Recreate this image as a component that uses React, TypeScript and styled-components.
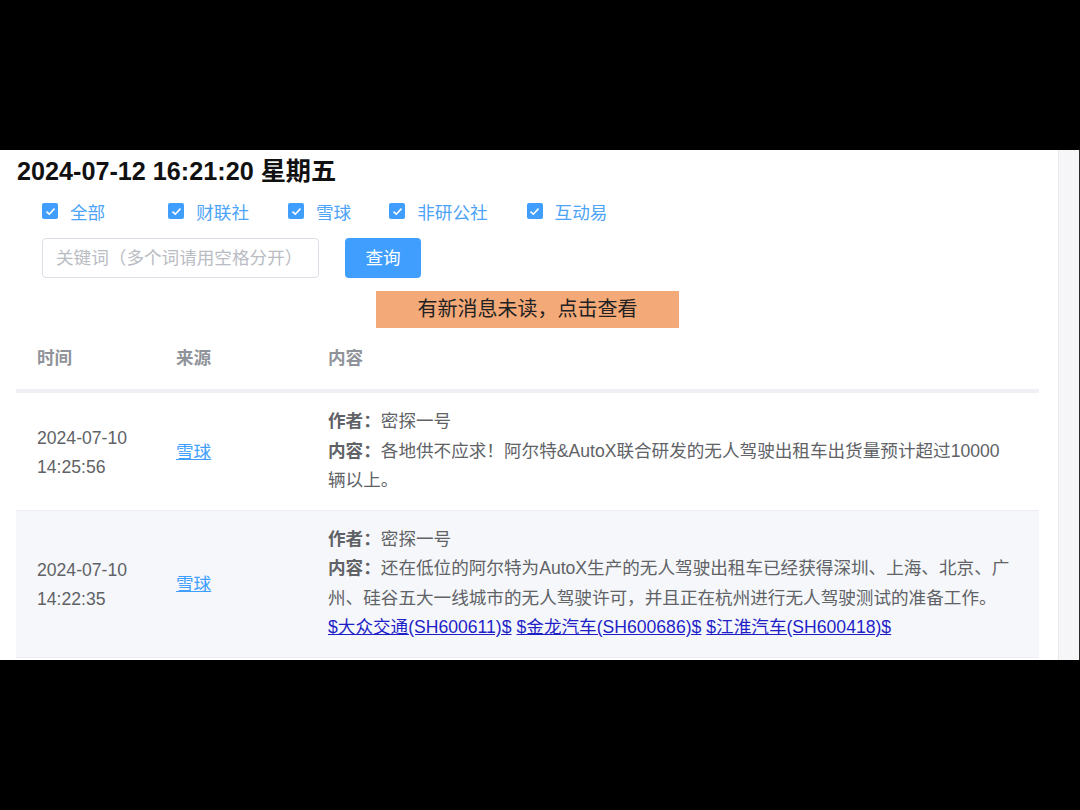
import React from 'react';
import styled, { createGlobalStyle } from 'styled-components';

const GlobalStyle = createGlobalStyle`
  html, body {
    margin: 0;
    padding: 0;
    background: #000;
  }
  body {
    font-family: "Liberation Sans", "Noto Sans CJK SC", sans-serif;
  }
`;

const Frame = styled.div`
  display: flex;
  flex-direction: column;
  width: 1080px;
  height: 810px;
  background: #000;
`;

const Letterbox = styled.div<{ $h: number }>`
  height: ${(p) => p.$h}px;
  flex: none;
  background: #000;
`;

const Screen = styled.div`
  display: flex;
  height: 510px;
  overflow: hidden;
  background: #fff;
`;

const Page = styled.div`
  flex: 1;
  padding: 0 19px 0 16px;
  overflow: hidden;
`;

const Scrollbar = styled.div`
  flex: none;
  width: 22px;
  box-sizing: border-box;
  background: #f6f6f8;
  border-left: 1px solid #e8e8eb;
  border-right: 1px solid #2a2a2a;
`;

const Title = styled.h1`
  margin: 0;
  padding: 3px 0 0 1px;
  height: 36px;
  line-height: 36px;
  font-size: 25.2px;
  font-weight: bold;
  color: #111;
`;

const FilterRow = styled.div`
  display: flex;
  align-items: center;
  height: 30px;
  margin: 7px 0 0 26px;
`;

const CheckItem = styled.label<{ $gap: number }>`
  display: flex;
  align-items: center;
  margin-right: ${(p) => p.$gap}px;
  cursor: pointer;
`;

const Box = styled.span`
  display: flex;
  align-items: center;
  justify-content: center;
  width: 16px;
  height: 16px;
  border-radius: 2px;
  background: #409eff;
`;

const CheckLabel = styled.span`
  margin-left: 12px;
  font-size: 17.6px;
  color: #4da3f7;
`;

const SearchRow = styled.div`
  display: flex;
  align-items: center;
  gap: 26px;
  margin: 12px 0 0 26px;
`;

const Input = styled.input`
  box-sizing: border-box;
  width: 277px;
  height: 40px;
  padding: 0 13px;
  border: 1px solid #dcdfe6;
  border-radius: 4px;
  font-family: inherit;
  font-size: 17.6px;
  color: #606266;
  outline: none;
  &::placeholder {
    color: #b9bcc3;
  }
`;

const Button = styled.button`
  width: 76px;
  height: 40px;
  padding: 0 0 3px;
  border: none;
  border-radius: 4px;
  background: #409eff;
  color: #fff;
  font-family: inherit;
  font-size: 17.6px;
`;

const BannerRow = styled.div`
  display: flex;
  justify-content: center;
  margin-top: 13px;
`;

const Banner = styled.div`
  width: 303px;
  height: 37px;
  line-height: 36px;
  text-align: center;
  background: #f4a978;
  color: #222;
  font-size: 20px;
`;

const Grid = styled.div<{ $head?: boolean; $stripe?: boolean }>`
  display: grid;
  grid-template-columns: 140px 152px 1fr;
  align-items: center;
  background: ${(p) => (p.$stripe ? '#f5f7fa' : '#fff')};
  border-bottom: ${(p) => (p.$head ? '4px solid #eef0f5' : '1px solid #ebeef5')};
  ${(p) => (p.$head ? 'height: 61px;' : 'padding: 14px 0 14px;')}
`;

const Cell = styled.div<{ $first?: boolean }>`
  padding: 0 23px 0 ${(p) => (p.$first ? 21 : 20)}px;
  font-size: 17.6px;
  line-height: 29.5px;
  color: #606266;
`;

const HeadCell = styled(Cell)`
  color: #909399;
  font-weight: bold;
`;

const TimeCell = styled(Cell)`
  padding-top: 3px;
  line-height: 29px;
`;

const SourceCell = styled(Cell)`
  padding-top: 3px;
`;

const Source = styled.a`
  color: #409eff;
  text-decoration: underline;
  cursor: pointer;
`;

const Key = styled.b`
  color: #606266;
`;

const Stock = styled.a`
  color: #1f1fc8;
  text-decoration: underline;
  margin-right: 5px;
  cursor: pointer;
`;

const Check = () => (
  <svg width="11" height="9" viewBox="0 0 11 9">
    <path d="M1.5 4.6 L4.3 7.2 L9.5 1.6" fill="none" stroke="#fff" strokeWidth="1.6" />
  </svg>
);

const sources = [
  { name: '全部', gap: 63 },
  { name: '财联社', gap: 39 },
  { name: '雪球', gap: 38 },
  { name: '非研公社', gap: 39 },
  { name: '互动易', gap: 0 },
];

const rows = [
  {
    time: ['2024-07-10', '14:25:56'],
    author: '密探一号',
    text: '各地供不应求！阿尔特&AutoX联合研发的无人驾驶出租车出货量预计超过10000辆以上。',
    stocks: [] as string[],
  },
  {
    time: ['2024-07-10', '14:22:35'],
    author: '密探一号',
    text: '还在低位的阿尔特为AutoX生产的无人驾驶出租车已经获得深圳、上海、北京、广州、硅谷五大一线城市的无人驾驶许可，并且正在杭州进行无人驾驶测试的准备工作。',
    stocks: ['$大众交通(SH600611)$', '$金龙汽车(SH600686)$', '$江淮汽车(SH600418)$'],
  },
];

export default function App() {
  return (
    <Frame>
      <GlobalStyle />
      <Letterbox $h={150} />
      <Screen>
        <Page>
          <Title>2024-07-12 16:21:20 星期五</Title>
          <FilterRow>
            {sources.map((s) => (
              <CheckItem key={s.name} $gap={s.gap}>
                <Box>
                  <Check />
                </Box>
                <CheckLabel>{s.name}</CheckLabel>
              </CheckItem>
            ))}
          </FilterRow>
          <SearchRow>
            <Input placeholder="关键词（多个词请用空格分开）" />
            <Button>查询</Button>
          </SearchRow>
          <BannerRow>
            <Banner>有新消息未读，点击查看</Banner>
          </BannerRow>
          <Grid $head>
            <HeadCell $first>时间</HeadCell>
            <HeadCell>来源</HeadCell>
            <HeadCell>内容</HeadCell>
          </Grid>
          {rows.map((r, i) => (
            <Grid key={i} $stripe={i % 2 === 1}>
              <TimeCell $first>
                {r.time[0]}
                <br />
                {r.time[1]}
              </TimeCell>
              <SourceCell>
                <Source>雪球</Source>
              </SourceCell>
              <Cell>
                <div>
                  <Key>作者：</Key>
                  {r.author}
                </div>
                <div>
                  <Key>内容：</Key>
                  {r.text}
                </div>
                {r.stocks.length > 0 && (
                  <div>
                    {r.stocks.map((s) => (
                      <Stock key={s}>{s}</Stock>
                    ))}
                  </div>
                )}
              </Cell>
            </Grid>
          ))}
        </Page>
        <Scrollbar />
      </Screen>
      <Letterbox $h={150} />
    </Frame>
  );
}
